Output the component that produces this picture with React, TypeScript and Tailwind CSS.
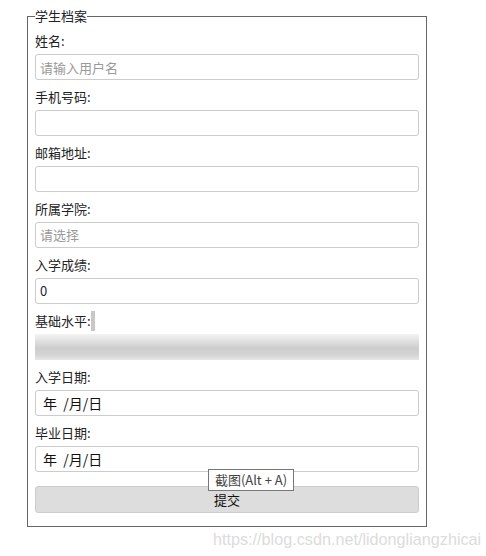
import React from "react";

const labelCls = "block h-5 leading-5 text-[13px] text-[#222]";
const boxCls =
  "mt-[3px] mb-[7px] block h-[26px] w-full rounded-[3px] border border-[#ccc] bg-white px-1 text-[13px] outline-none";

const Field: React.FC<{ label: string; children: React.ReactNode }> = ({ label, children }) => (
  <div>
    <label className={labelCls}>{label}</label>
    {children}
  </div>
);

export default function App() {
  return (
    <div
      className="relative h-[556px] w-[486px] overflow-hidden bg-white pt-[6px] pl-[27px]"
      style={{ fontFamily: '"Noto Sans CJK SC", "Liberation Sans", sans-serif' }}
    >
      <fieldset className="w-[400px] border border-[#666] px-[7px] pt-[5px] pb-[13px]">
        <legend className="h-5 leading-5 text-[13px] text-[#222]">学生档案</legend>

        <Field label="姓名:">
          <input className={boxCls + " placeholder:text-[#999]"} placeholder="请输入用户名" />
        </Field>
        <Field label="手机号码:">
          <input className={boxCls} />
        </Field>
        <Field label="邮箱地址:">
          <input className={boxCls} />
        </Field>
        <Field label="所属学院:">
          <div className={boxCls + " leading-6 text-[#999]"}>请选择</div>
        </Field>
        <Field label="入学成绩:">
          <div className={boxCls + " leading-6 text-[#1a1a40]"}>0</div>
        </Field>

        <div>
          <label className={labelCls}>
            基础水平:
            <span className="inline-block h-5 w-[4px] align-top bg-[#c8c8c8]" />
          </label>
          <div className="mt-[3px] mb-[7px] h-[26px] w-full bg-[linear-gradient(to_bottom,#f3f3f3_0%,#e2e2e2_25%,#cdcdcd_55%,#d4d4d4_80%,#e6e6e6_100%)]" />
        </div>

        <Field label="入学日期:">
          <div className={boxCls + " pl-[7px] leading-6 text-[14px] text-[#111]"}>年&nbsp; /月/日</div>
        </Field>
        <Field label="毕业日期:">
          <div className={boxCls + " pl-[7px] leading-6 text-[14px] text-[#111]"}>年&nbsp; /月/日</div>
        </Field>

        <button className="mt-[14px] block h-[27px] w-full rounded-[3px] border border-[#ccc] bg-[#dddddd] text-[13px] text-[#111]">
          提交
        </button>
      </fieldset>

      <div className="absolute left-[208px] top-[469px] h-[22px] w-[86px] border border-[#777] bg-white text-center leading-5 text-[13px] text-[#444]">
        截图(Alt + A)
      </div>

      <div
        className="absolute left-[213px] top-[527px] whitespace-nowrap text-[16.2px] text-[#dcdcdc]"
        style={{ fontFamily: '"Liberation Sans", Arial, sans-serif' }}
      >
        https://blog.csdn.net/lidongliangzhicai
      </div>
    </div>
  );
}
